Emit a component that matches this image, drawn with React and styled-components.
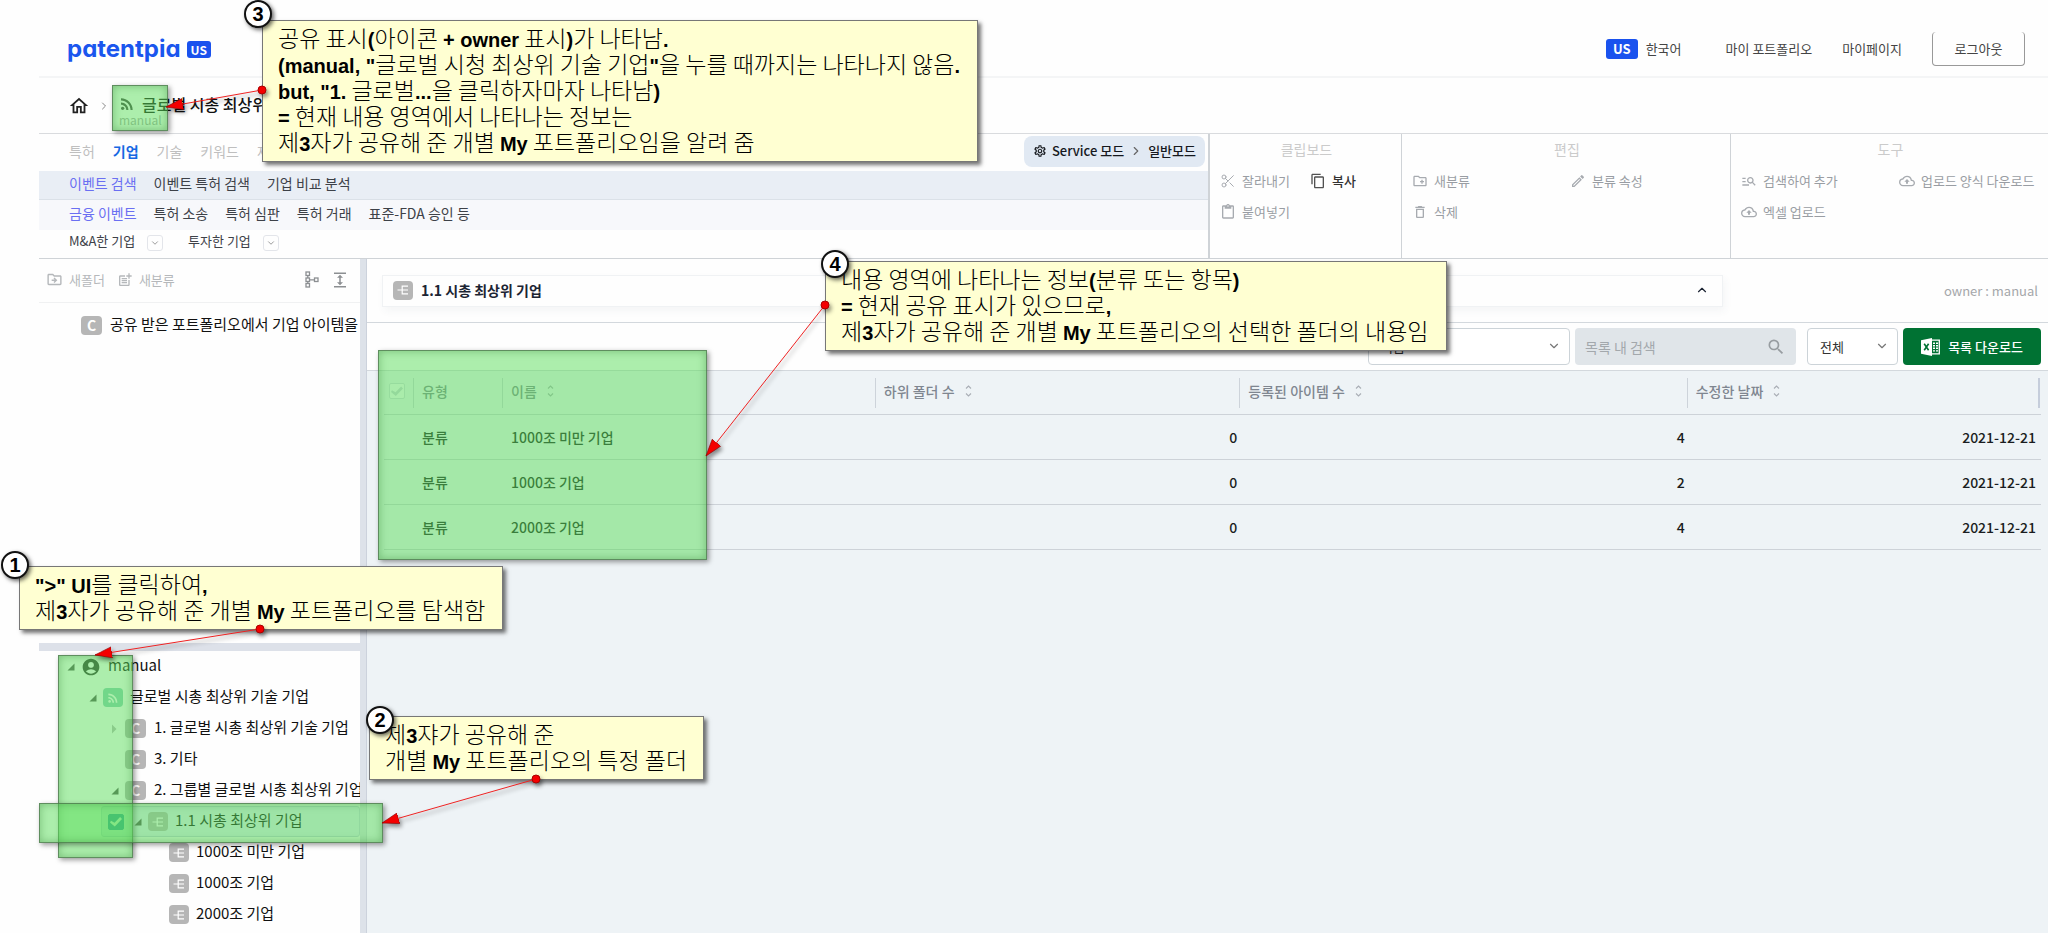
import React from 'react';
import styled, { createGlobalStyle, css } from 'styled-components';
import {
  MdAccountCircle,
  MdContentCopy,
  MdContentPaste,
  MdDeleteOutline,
  MdExpand,
  MdManageSearch,
  MdOutlineBackup,
  MdOutlineCreateNewFolder,
  MdOutlineDriveFileMove,
  MdOutlineHome,
  MdOutlineModeEdit,
  MdOutlinePostAdd,
  MdOutlineSettings,
  MdRssFeed,
  MdSearch,
} from 'react-icons/md';
import { ChevronDown, ChevronRight, ChevronUp, Scissors } from 'lucide-react';

const GlobalStyle = createGlobalStyle`
  *, *::before, *::after {
    box-sizing: border-box;
  }

  body {
    margin: 0;
    background: #fefefe;
    color: #222;
    font-family: 'Noto Sans CJK KR', 'Noto Sans', sans-serif;
    font-size: 13px;
    line-height: 20px;
  }

  button, input, select {
    margin: 0;
    padding: 0;
    border: 0;
    background: none;
    color: inherit;
    font: inherit;
  }

  a {
    color: inherit;
    text-decoration: none;
  }

  svg {
    display: block;
    flex: none;
  }
`;

const Page = styled.div`
  position: relative;
  display: flex;
  flex-direction: column;
  min-height: 100vh;
  padding-left: 39px;
  overflow: hidden;
`;

/* ---------- header ---------- */

const Header = styled.header`
  display: flex;
  align-items: center;
  height: 78px;
  padding: 22px 23px 0 28px;
  border-bottom: 2px solid #f4f5f6;
  color: #444;
`;

const Logo = styled.a`
  color: #1a56ee;
  font-family: Inter, Lato, sans-serif;
  font-feature-settings: 'cv11';
  font-size: 24px;
  font-weight: 700;
  line-height: 32px;
`;

const Country = styled.span`
  padding: 0 ${(props) => (props.$large ? 7 : 4)}px;
  border-radius: 3px;
  background: #1a52ee;
  color: #fff;
  font-size: ${(props) => (props.$large ? 13 : 12)}px;
  font-weight: 700;
  line-height: ${(props) => (props.$large ? 20 : 17)}px;
`;

const LogoCountry = styled(Country)`
  margin: 0 auto 0 6px;
`;

const Language = styled.a`
  display: flex;
  align-items: center;
  gap: 8px;
  margin-right: 44px;
`;

const HeaderLink = styled.a`
  margin-right: 30px;
`;

const Logout = styled.button`
  width: 93px;
  height: 34px;
  border: 1px solid #999;
  border-top: 0;
  border-radius: 4px;
  cursor: pointer;
`;

const Breadcrumb = styled.nav`
  display: flex;
  align-items: center;
  gap: 8px;
  height: 56px;
  padding-left: 29px;
  border-bottom: 1px solid #d9dbde;
`;

const Crumb = styled.div`
  display: flex;
  flex-direction: column;
  padding-top: 8px;
`;

const CrumbName = styled.a`
  display: flex;
  align-items: center;
  gap: 6px;
  color: #111;
  font-size: 16px;
  font-weight: 500;
  line-height: 20px;
`;

const CrumbOwner = styled.span`
  padding-left: 1px;
  color: #aaa;
  font-size: 12px;
  line-height: 12px;
`;

/* ---------- ribbon ---------- */

const Ribbon = styled.section`
  display: flex;
  height: 125px;
  border-bottom: 1px solid #cfd3d7;
`;

const RibbonMenu = styled.div`
  flex: 1;
  min-width: 0;
`;

const MenuRow = styled.nav`
  display: flex;
  align-items: center;
  gap: ${(props) => props.$gap || 17}px;
  height: ${(props) => props.$height}px;
  padding: 0 3px 4px 30px;
  border-bottom: ${(props) => (props.$line ? '1px solid #dbe1e8' : '0')};
  background: ${(props) => props.$bg || 'transparent'};
  color: #3d4148;
  font-size: 14px;
`;

const MenuLink = styled.a`
  color: ${(props) => (props.$active ? '#6a6ff2' : 'inherit')};
`;

const TabLink = styled.a`
  color: ${(props) => (props.$active ? '#1668e3' : '#bfbfbf')};
  font-weight: ${(props) => (props.$active ? 700 : 400)};
`;

const ModeButton = styled.button`
  display: flex;
  align-items: center;
  align-self: flex-end;
  gap: 5px;
  height: 31px;
  margin-left: auto;
  padding: 0 9px 1px;
  border-radius: 8px;
  background: #e1e9f3;
  color: #15181d;
  font-size: 13px;
  font-weight: 500;
  cursor: pointer;
`;

const DropMenu = styled.div`
  display: flex;
  align-items: center;
  gap: 12px;
  margin-right: 8px;
  font-size: 13px;
`;

const DropButton = styled.button`
  display: grid;
  place-items: center;
  align-self: flex-end;
  width: 16px;
  height: 16px;
  border: 1px solid #e3e5ea;
  border-radius: 3px;
  color: #888;
`;

const ToolGroup = styled.section`
  width: ${(props) => props.$width}px;
  padding: 5px 8px 0 10px;
  border-left: ${(props) => props.$border}px solid #cfd3d7;
  color: #999da3;
`;

const ToolTitle = styled.h2`
  margin: 0 0 11px;
  color: #cbcbcb;
  font-size: 14px;
  font-weight: 400;
  line-height: 21px;
  text-align: center;
`;

const ToolGrid = styled.div`
  display: grid;
  grid-template-columns: ${(props) => props.$columns};
  row-gap: 11px;
`;

const ToolButton = styled.button`
  display: flex;
  align-items: center;
  gap: 6px;
  color: ${(props) => (props.$enabled ? '#333' : 'inherit')};
  font-weight: ${(props) => (props.$enabled ? 500 : 400)};
  white-space: nowrap;
  cursor: pointer;

  svg {
    width: 16px;
    opacity: 0.85;
  }
`;

/* ---------- left side ---------- */

const Workspace = styled.main`
  flex: 1;
  display: flex;
  min-height: 0;
`;

const Sidebar = styled.aside`
  display: flex;
  flex-direction: column;
  width: 321px;
  overflow: hidden;
`;

const SideTools = styled.div`
  display: flex;
  align-items: center;
  gap: 12px;
  height: 44px;
  padding: 0 11px 2px 7px;
  border-bottom: 1px solid #f0f1f2;
  color: #b5b8bb;
`;

const SideTool = styled.button`
  display: flex;
  align-items: center;
  gap: 6px;
  cursor: pointer;
`;

const SideIcons = styled.div`
  display: flex;
  gap: 12px;
  margin-left: auto;
  color: #8c8f92;
`;

const UpperPane = styled.div`
  height: 340px;
  padding-top: 7px;
`;

const HorizontalSplit = styled.div`
  height: 8px;
  background: #dde1e9;
`;

const VerticalSplit = styled.div`
  width: 7px;
  border-right: 1px solid #ccd2dc;
  background: #dde2e9;
`;

const Tree = styled.ul`
  margin: 0;
  padding: 0;
  list-style: none;
`;

const TreeRow = styled.li`
  display: flex;
  align-items: center;
  height: 31px;
  margin-left: ${(props) => (props.$selected ? 62 : 0)}px;
  padding-left: ${(props) =>
    props.$selected ? 6 : 26 + props.$level * 22}px;
  ${(props) =>
    props.$selected &&
    css`
      border: 1px solid #c9d3e2;
      border-radius: 3px;
      background: #e3eaf5;
    `}
`;

const TreeName = styled.a`
  margin-left: 7px;
  padding-bottom: 3px;
  color: #111;
  font-size: 15px;
  white-space: nowrap;
`;

const TriangleSlot = styled.span`
  flex: none;
  display: flex;
  width: 16px;
  padding-left: 2px;
`;

const Badge = styled.span`
  flex: none;
  display: grid;
  place-items: center;
  width: ${(props) => (props.$letter ? 21 : 20)}px;
  height: 19px;
  margin-right: ${(props) => (props.$letter ? 1 : 0)}px;
  border-radius: 4px;
  background: ${(props) => (props.$shared ? '#8ad0b8' : '#b6b6b6')};
  color: #fff;
  font-size: 14px;
  font-weight: 700;
  line-height: 19px;
`;

const Check = styled.input`
  appearance: none;
  flex: none;
  display: grid;
  place-content: center;
  width: 16px;
  height: 16px;
  margin-right: 8px;
  border: 1px solid ${(props) => (props.$muted ? '#d5dbe2' : '#1279b0')};
  border-radius: 2px;
  background: ${(props) => (props.$muted ? '#fafbfc' : '#1279b0')};

  &::before {
    content: '';
    width: 12px;
    height: 10px;
    background: ${(props) => (props.$muted ? '#cfd5dc' : '#fff')};
    clip-path: polygon(8% 42%, 38% 62%, 84% 4%, 100% 24%, 40% 100%, 0 60%);
  }
`;

/* ---------- right side ---------- */

const Content = styled.section`
  flex: 1;
  display: flex;
  flex-direction: column;
  min-width: 0;
  background: #eef3f6;
`;

const FolderBar = styled.div`
  display: flex;
  align-items: center;
  justify-content: space-between;
  height: 64px;
  padding: 0 10px 0 15px;
  border-bottom: 1px solid #d3d8dd;
  background: #fefefe;
`;

const FolderCard = styled.div`
  display: flex;
  align-items: center;
  gap: 8px;
  width: 81%;
  height: 32px;
  padding: 0 13px 1px 10px;
  border: 1px solid #f0f2f4;
  box-shadow: 2px 4px 8px rgba(60, 80, 100, 0.05);
  color: #1c2433;
`;

const FolderTitle = styled.h1`
  flex: 1;
  margin: 0;
  font-size: 14px;
  font-weight: 700;
`;

const Owner = styled.span`
  color: #a5a7aa;
`;

const FilterBar = styled.div`
  display: flex;
  align-items: center;
  justify-content: flex-end;
  gap: 5px;
  height: 48px;
  padding: 0 7px;
  border-bottom: 1px solid #d3d8dd;
  background: #fefefe;
`;

const SelectBox = styled.div`
  position: relative;
  width: ${(props) => props.$width}px;

  svg {
    position: absolute;
    top: 11px;
    right: 9px;
    color: #777;
    pointer-events: none;
  }
`;

const Select = styled.select`
  appearance: none;
  width: 100%;
  height: 37px;
  padding: 0 12px;
  border: 1px solid #ccd3d8;
  border-radius: 4px;
  background: #fff;
  color: #333;
`;

const SearchBox = styled.div`
  display: flex;
  align-items: center;
  width: 221px;
  height: 37px;
  margin-right: 6px;
  padding: 0 10px;
  border-radius: 4px;
  background: #e0e5e9;
  color: #989da1;

  input {
    flex: 1;
    min-width: 0;
    outline: 0;
    font-size: 14px;
  }

  input::placeholder {
    color: #a3a8ac;
  }
`;

const DownloadButton = styled.button`
  display: flex;
  align-items: center;
  justify-content: center;
  gap: 8px;
  width: 138px;
  height: 37px;
  border-radius: 4px;
  background: #007233;
  color: #fff;
  font-weight: 500;
  cursor: pointer;
`;

const TableWrap = styled.div`
  padding: 0 7px 0 17px;
`;

const Table = styled.table`
  width: 100%;
  border-collapse: separate;
  border-spacing: 0;
  table-layout: fixed;
  font-size: 14px;

  th,
  td {
    height: 45px;
    padding: 0;
    border-bottom: 1px solid #cdd2d8;
    text-align: left;
  }

  th {
    height: 44px;
    color: #7f8690;
    font-weight: 500;
  }
`;

const HeadCell = styled.div`
  display: flex;
  align-items: center;
  gap: 10px;
  height: 30px;
  margin-right: ${(props) => (props.$last ? 1 : 0)}px;
  padding: 0 0 3px ${(props) => (props.$first ? 5 : 8)}px;
  border-left: ${(props) => (props.$first ? 0 : 1)}px solid #cdd3da;
  border-right: ${(props) => (props.$last ? 2 : 0)}px solid #c5cddb;
`;

const Cell = styled.div`
  padding: 0 ${(props) => (props.$last ? 5 : 2)}px 1px 9px;
  color: #1a1d21;
  font-weight: 500;
  text-align: ${(props) => (props.$number ? 'right' : 'left')};
`;

/* ---------- guide notes ---------- */

const Highlight = styled.div`
  position: absolute;
  top: ${(props) => props.$y}px;
  left: ${(props) => props.$x}px;
  width: ${(props) => props.$w}px;
  height: ${(props) => props.$h}px;
  border: 1px solid rgba(70, 110, 70, 0.75);
  background: rgba(90, 222, 90, 0.5);
  box-shadow: 2px 2px 5px rgba(0, 0, 0, 0.4),
    inset 0 0 8px rgba(40, 120, 40, 0.4);
  pointer-events: none;
`;

const Note = styled.aside`
  position: absolute;
  top: ${(props) => props.$y}px;
  left: ${(props) => props.$x}px;
  width: ${(props) => props.$w}px;
  padding: 3px 0 7px 15px;
  border: 1px solid #777;
  background: #ffffd2;
  box-shadow: 3px 3px 4px rgba(0, 0, 0, 0.55);
  color: #000;
  font-size: 23px;
  font-weight: 300;
  line-height: 26px;
  white-space: nowrap;

  p {
    height: 26px;
    margin: 0;
  }

  b {
    font-family: 'Liberation Sans', Arial, sans-serif;
    font-size: 20px;
    font-weight: 700;
  }
`;

const NoteNumber = styled.span`
  position: absolute;
  top: ${(props) => props.$top}px;
  left: ${(props) => props.$left}px;
  width: 28px;
  height: 28px;
  border: 2px solid #111;
  border-radius: 50%;
  background: #fff;
  box-shadow: 2px 2px 4px rgba(0, 0, 0, 0.6);
  font-family: 'Liberation Sans', Arial, sans-serif;
  font-size: 20px;
  font-weight: 700;
  line-height: 24px;
  text-align: center;
`;

const Arrows = styled.svg`
  position: absolute;
  top: 0;
  left: 0;
  width: 100%;
  height: 100%;
  filter: drop-shadow(2px 3px 2px rgba(0, 0, 0, 0.45));
  pointer-events: none;
`;

const TreeGlyph = () => (
  <svg width="14" height="17" viewBox="0 0 14 17" fill="none" stroke="currentColor" strokeWidth="1.3">
    <rect x="1" y="1" width="3.5" height="3.5" />
    <rect x="1" y="7" width="3.5" height="3.5" />
    <rect x="1" y="12.5" width="3.5" height="3.5" />
    <rect x="9.5" y="7" width="3.5" height="3.5" />
    <path d="M4.5 8.8h5M2.8 4.5v2.5M2.8 10.5v2" />
  </svg>
);

const CategoryGlyph = () => (
  <svg width="12" height="12" viewBox="0 0 12 12" fill="none" stroke="currentColor" strokeWidth="1.2">
    <path d="M0.5 6h10.5M11 2.2H5.2v7.6H11" />
  </svg>
);

const ExcelGlyph = () => (
  <svg width="19" height="18" viewBox="0 0 19 18">
    <path d="M0 2.2L11 0v18L0 15.8z" fill="#fff" />
    <path d="M3.2 5.8l4.4 6.4M7.6 5.8L3.2 12.2" stroke="#007233" strokeWidth="1.6" />
    <path d="M11 2.2h7.3v13.6H11" fill="none" stroke="#fff" strokeWidth="1.3" />
    <path d="M12 5.2h5M12 7.8h5M12 10.3h5M12 12.9h5" stroke="#fff" strokeWidth="1.4" strokeDasharray="2 1" />
  </svg>
);

const SortGlyph = () => (
  <svg width="7" height="12" viewBox="0 0 7 12" fill="none" stroke="#a9aeb5" strokeWidth="1.1">
    <path d="M1 3.5L3.5 1L6 3.5M1 8.5L3.5 11L6 8.5" />
  </svg>
);

const Triangle = ({ open }) => (
  <svg width="8" height="10" viewBox="0 0 8 10">
    {open ? (
      <path d="M7.5 1.5V8.5H0.5z" fill="#555" />
    ) : (
      <path d="M1 0.5L5.5 5L1 9.5z" fill="#bbb" />
    )}
  </svg>
);

const nodes = [
  { level: 0, type: 'user', open: true, name: 'manual' },
  { level: 1, type: 'shared', open: true, name: '글로벌 시총 최상위 기술 기업' },
  { level: 2, type: 'C', open: false, name: '1. 글로벌 시총 최상위 기술 기업' },
  { level: 2, type: 'C', name: '3. 기타' },
  { level: 2, type: 'C', open: true, name: '2. 그룹별 글로벌 시총 최상위 기업' },
  { level: 3, type: 'E', open: true, name: '1.1 시총 최상위 기업', selected: true },
  { level: 4, type: 'E', name: '1000조 미만 기업' },
  { level: 4, type: 'E', name: '1000조 기업' },
  { level: 4, type: 'E', name: '2000조 기업' },
];

const columns = ['이름', '하위 폴더 수', '등록된 아이템 수', '수정한 날짜'];

const rows = [
  { name: '1000조 미만 기업', folders: 0, items: 4, date: '2021-12-21' },
  { name: '1000조 기업', folders: 0, items: 2, date: '2021-12-21' },
  { name: '2000조 기업', folders: 0, items: 4, date: '2021-12-21' },
];

const arrows = [
  { from: [262, 90], to: [166, 107] },
  { from: [260, 629], to: [95, 655] },
  { from: [536, 779], to: [382, 823] },
  { from: [825, 305], to: [706, 456] },
];

const NodeIcon = ({ type }) => {
  if (type === 'user') return <MdAccountCircle size={20} color="#333" />;
  if (type === 'shared')
    return (
      <Badge $shared>
        <MdRssFeed size={14} />
      </Badge>
    );
  if (type === 'C') return <Badge $letter>C</Badge>;
  return (
    <Badge>
      <CategoryGlyph />
    </Badge>
  );
};

const TreeNode = ({ level, type, open, name, selected }) => (
  <TreeRow $level={level} $selected={selected}>
    {selected && <Check type="checkbox" defaultChecked aria-label={name} />}
    <TriangleSlot>{open !== undefined && <Triangle open={open} />}</TriangleSlot>
    <NodeIcon type={type} />
    <TreeName href="#">{name}</TreeName>
  </TreeRow>
);

const TopHeader = () => (
  <Header>
    <Logo href="#">patentpia</Logo>
    <LogoCountry>US</LogoCountry>
    <Language href="#">
      <Country $large>US</Country>
      한국어
    </Language>
    <HeaderLink href="#">마이 포트폴리오</HeaderLink>
    <HeaderLink href="#">마이페이지</HeaderLink>
    <Logout type="button">로그아웃</Logout>
  </Header>
);

const RibbonArea = () => (
  <Ribbon>
    <RibbonMenu>
      <MenuRow $height={37} $gap={18}>
        <TabLink href="#">특허</TabLink>
        <TabLink href="#" $active>
          기업
        </TabLink>
        <TabLink href="#">기술</TabLink>
        <TabLink href="#">키워드</TabLink>
        <TabLink href="#">제품</TabLink>
        <ModeButton type="button">
          <MdOutlineSettings size={14} />
          Service 모드
          <ChevronRight size={14} color="#666" />
          일반모드
        </ModeButton>
      </MenuRow>
      <MenuRow $height={29} $bg="#e9eef5" $line>
        <MenuLink href="#" $active>
          이벤트 검색
        </MenuLink>
        <MenuLink href="#">이벤트 특허 검색</MenuLink>
        <MenuLink href="#">기업 비교 분석</MenuLink>
      </MenuRow>
      <MenuRow $height={30} $bg="#f7f8fb">
        <MenuLink href="#" $active>
          금융 이벤트
        </MenuLink>
        <MenuLink href="#">특허 소송</MenuLink>
        <MenuLink href="#">특허 심판</MenuLink>
        <MenuLink href="#">특허 거래</MenuLink>
        <MenuLink href="#">표준-FDA 승인 등</MenuLink>
      </MenuRow>
      <MenuRow $height={26}>
        <DropMenu>
          <MenuLink href="#">M&amp;A한 기업</MenuLink>
          <DropButton type="button" aria-label="M&A한 기업">
            <ChevronDown size={10} />
          </DropButton>
        </DropMenu>
        <DropMenu>
          <MenuLink href="#">투자한 기업</MenuLink>
          <DropButton type="button" aria-label="투자한 기업">
            <ChevronDown size={10} />
          </DropButton>
        </DropMenu>
      </MenuRow>
    </RibbonMenu>
    <ToolGroup $width={193} $border={2}>
      <ToolTitle>클립보드</ToolTitle>
      <ToolGrid $columns="90px 1fr">
        <ToolButton type="button">
          <Scissors size={16} strokeWidth={1.5} />
          잘라내기
        </ToolButton>
        <ToolButton type="button" $enabled>
          <MdContentCopy size={16} />
          복사
        </ToolButton>
        <ToolButton type="button">
          <MdContentPaste size={16} />
          붙여넣기
        </ToolButton>
      </ToolGrid>
    </ToolGroup>
    <ToolGroup $width={329} $border={1}>
      <ToolTitle>편집</ToolTitle>
      <ToolGrid $columns="158px 1fr">
        <ToolButton type="button">
          <MdOutlineCreateNewFolder size={16} />
          새분류
        </ToolButton>
        <ToolButton type="button">
          <MdOutlineModeEdit size={16} />
          분류 속성
        </ToolButton>
        <ToolButton type="button">
          <MdDeleteOutline size={16} />
          삭제
        </ToolButton>
      </ToolGrid>
    </ToolGroup>
    <ToolGroup $width={318} $border={1}>
      <ToolTitle>도구</ToolTitle>
      <ToolGrid $columns="158px 1fr">
        <ToolButton type="button">
          <MdManageSearch size={16} />
          검색하여 추가
        </ToolButton>
        <ToolButton type="button">
          <MdOutlineBackup size={16} />
          업로드 양식 다운로드
        </ToolButton>
        <ToolButton type="button">
          <MdOutlineBackup size={16} />
          엑셀 업로드
        </ToolButton>
      </ToolGrid>
    </ToolGroup>
  </Ribbon>
);

const SideArea = () => (
  <Sidebar>
    <SideTools>
      <SideTool type="button">
        <MdOutlineDriveFileMove size={17} />
        새폴더
      </SideTool>
      <SideTool type="button">
        <MdOutlinePostAdd size={16} />
        새분류
      </SideTool>
      <SideIcons>
        <SideTool type="button" aria-label="트리 보기">
          <TreeGlyph />
        </SideTool>
        <SideTool type="button" aria-label="펼치기">
          <MdExpand size={18} />
        </SideTool>
      </SideIcons>
    </SideTools>
    <UpperPane>
      <Tree>
        <TreeNode level={0} type="C" name="공유 받은 포트폴리오에서 기업 아이템을 복사" />
      </Tree>
    </UpperPane>
    <HorizontalSplit />
    <Tree>
      {nodes.map((node) => (
        <TreeNode key={node.name} {...node} />
      ))}
    </Tree>
  </Sidebar>
);

const ContentArea = () => (
  <Content>
    <FolderBar>
      <FolderCard>
        <Badge>
          <CategoryGlyph />
        </Badge>
        <FolderTitle>1.1 시총 최상위 기업</FolderTitle>
        <ChevronUp size={14} />
      </FolderCard>
      <Owner>owner : manual</Owner>
    </FolderBar>
    <FilterBar>
      <SelectBox $width={202}>
        <Select aria-label="검색 항목">
          <option>이름</option>
        </Select>
        <ChevronDown size={14} />
      </SelectBox>
      <SearchBox>
        <input type="text" placeholder="목록 내 검색" aria-label="목록 내 검색" />
        <MdSearch size={20} />
      </SearchBox>
      <SelectBox $width={91}>
        <Select aria-label="범위">
          <option>전체</option>
        </Select>
        <ChevronDown size={14} />
      </SelectBox>
      <DownloadButton type="button">
        <ExcelGlyph />
        목록 다운로드
      </DownloadButton>
    </FilterBar>
    <TableWrap>
      <Table>
        <colgroup>
          <col style={{ width: '29px' }} />
          <col style={{ width: '89px' }} />
          <col style={{ width: '22.5%' }} />
          <col style={{ width: '22%' }} />
          <col style={{ width: '27%' }} />
          <col />
        </colgroup>
        <thead>
          <tr>
            <th>
              <HeadCell $first>
                <Check type="checkbox" defaultChecked $muted aria-label="전체 선택" />
              </HeadCell>
            </th>
            <th>
              <HeadCell>유형</HeadCell>
            </th>
            {columns.map((column, i) => (
              <th key={column}>
                <HeadCell $last={i === columns.length - 1}>
                  {column}
                  <SortGlyph />
                </HeadCell>
              </th>
            ))}
          </tr>
        </thead>
        <tbody>
          {rows.map((row) => (
            <tr key={row.name}>
              <td />
              <td>
                <Cell>분류</Cell>
              </td>
              <td>
                <Cell>{row.name}</Cell>
              </td>
              <td>
                <Cell $number>{row.folders}</Cell>
              </td>
              <td>
                <Cell $number>{row.items}</Cell>
              </td>
              <td>
                <Cell $number $last>
                  {row.date}
                </Cell>
              </td>
            </tr>
          ))}
        </tbody>
      </Table>
    </TableWrap>
  </Content>
);

const Guide = () => (
  <>
    <Highlight $x={112} $y={85} $w={56} $h={46} />
    <Highlight $x={378} $y={350} $w={329} $h={210} />
    <Highlight $x={58} $y={655} $w={75} $h={203} />
    <Highlight $x={39} $y={803} $w={344} $h={40} />

    <Note $x={19} $y={566} $w={484}>
      <NoteNumber $top={-16} $left={-19}>
        1
      </NoteNumber>
      <p>
        <b>"&gt;" UI</b>를 클릭하여<b>,</b>
      </p>
      <p>
        제<b>3</b>자가 공유해 준 개별 <b>My</b> 포트폴리오를 탐색함
      </p>
    </Note>
    <Note $x={369} $y={716} $w={335}>
      <NoteNumber $top={-11} $left={-4}>
        2
      </NoteNumber>
      <p>
        제<b>3</b>쟈가 공유해 준
      </p>
      <p>
        개별 <b>My</b> 포트폴리오의 특정 폴더
      </p>
    </Note>
    <Note $x={262} $y={20} $w={716}>
      <NoteNumber $top={-21} $left={-19}>
        3
      </NoteNumber>
      <p>
        공유 표시<b>(</b>아이콘 <b>+ owner</b> 표시<b>)</b>가 나타남<b>.</b>
      </p>
      <p>
        <b>(manual, "</b>글로벌 시청 최상위 기술 기업<b>"</b>을 누를 때까지는
        나타나지 않음<b>.</b>
      </p>
      <p>
        <b>but, "1.</b> 글로벌<b>...</b>을 클릭하자마자 나타남<b>)</b>
      </p>
      <p>
        <b>=</b> 현재 내용 영역에서 나타나는 정보는
      </p>
      <p>
        제<b>3</b>자가 공유해 준 개별 <b>My</b> 포트폴리오임을 알려 줌
      </p>
    </Note>
    <Note $x={825} $y={261} $w={622}>
      <NoteNumber $top={-12} $left={-5}>
        4
      </NoteNumber>
      <p>
        내용 영역에 나타나는 정보<b>(</b>분류 또는 항목<b>)</b>
      </p>
      <p>
        <b>=</b> 현재 공유 표시가 있으므로<b>,</b>
      </p>
      <p>
        제<b>3</b>자가 공유해 준 개별 <b>My</b> 포트폴리오의 선택한 폴더의
        내용임
      </p>
    </Note>

    <Arrows>
      <defs>
        <marker
          id="head"
          markerUnits="userSpaceOnUse"
          markerWidth="18"
          markerHeight="12"
          refX="17"
          refY="6"
          orient="auto"
        >
          <path d="M0 0.5L17 6L0 11.5z" fill="#f40000" stroke="#8a0000" strokeWidth="0.6" />
        </marker>
      </defs>
      {arrows.map(({ from, to }) => (
        <g key={from.join()}>
          <line
            x1={from[0]}
            y1={from[1]}
            x2={to[0]}
            y2={to[1]}
            stroke="#e22"
            markerEnd="url(#head)"
          />
          <circle cx={from[0]} cy={from[1]} r="4" fill="#f40000" stroke="#a00" />
        </g>
      ))}
    </Arrows>
  </>
);

const App = () => (
  <>
    <GlobalStyle />
    <Page>
      <TopHeader />
      <Breadcrumb>
        <MdOutlineHome size={22} />
        <ChevronRight size={12} color="#888" />
        <Crumb>
          <CrumbName href="#">
            <MdRssFeed size={18} color="#444" />
            글로벌 시총 최상위 기술 기업
          </CrumbName>
          <CrumbOwner>manual</CrumbOwner>
        </Crumb>
      </Breadcrumb>
      <RibbonArea />
      <Workspace>
        <SideArea />
        <VerticalSplit />
        <ContentArea />
      </Workspace>
      <Guide />
    </Page>
  </>
);

export default App;
